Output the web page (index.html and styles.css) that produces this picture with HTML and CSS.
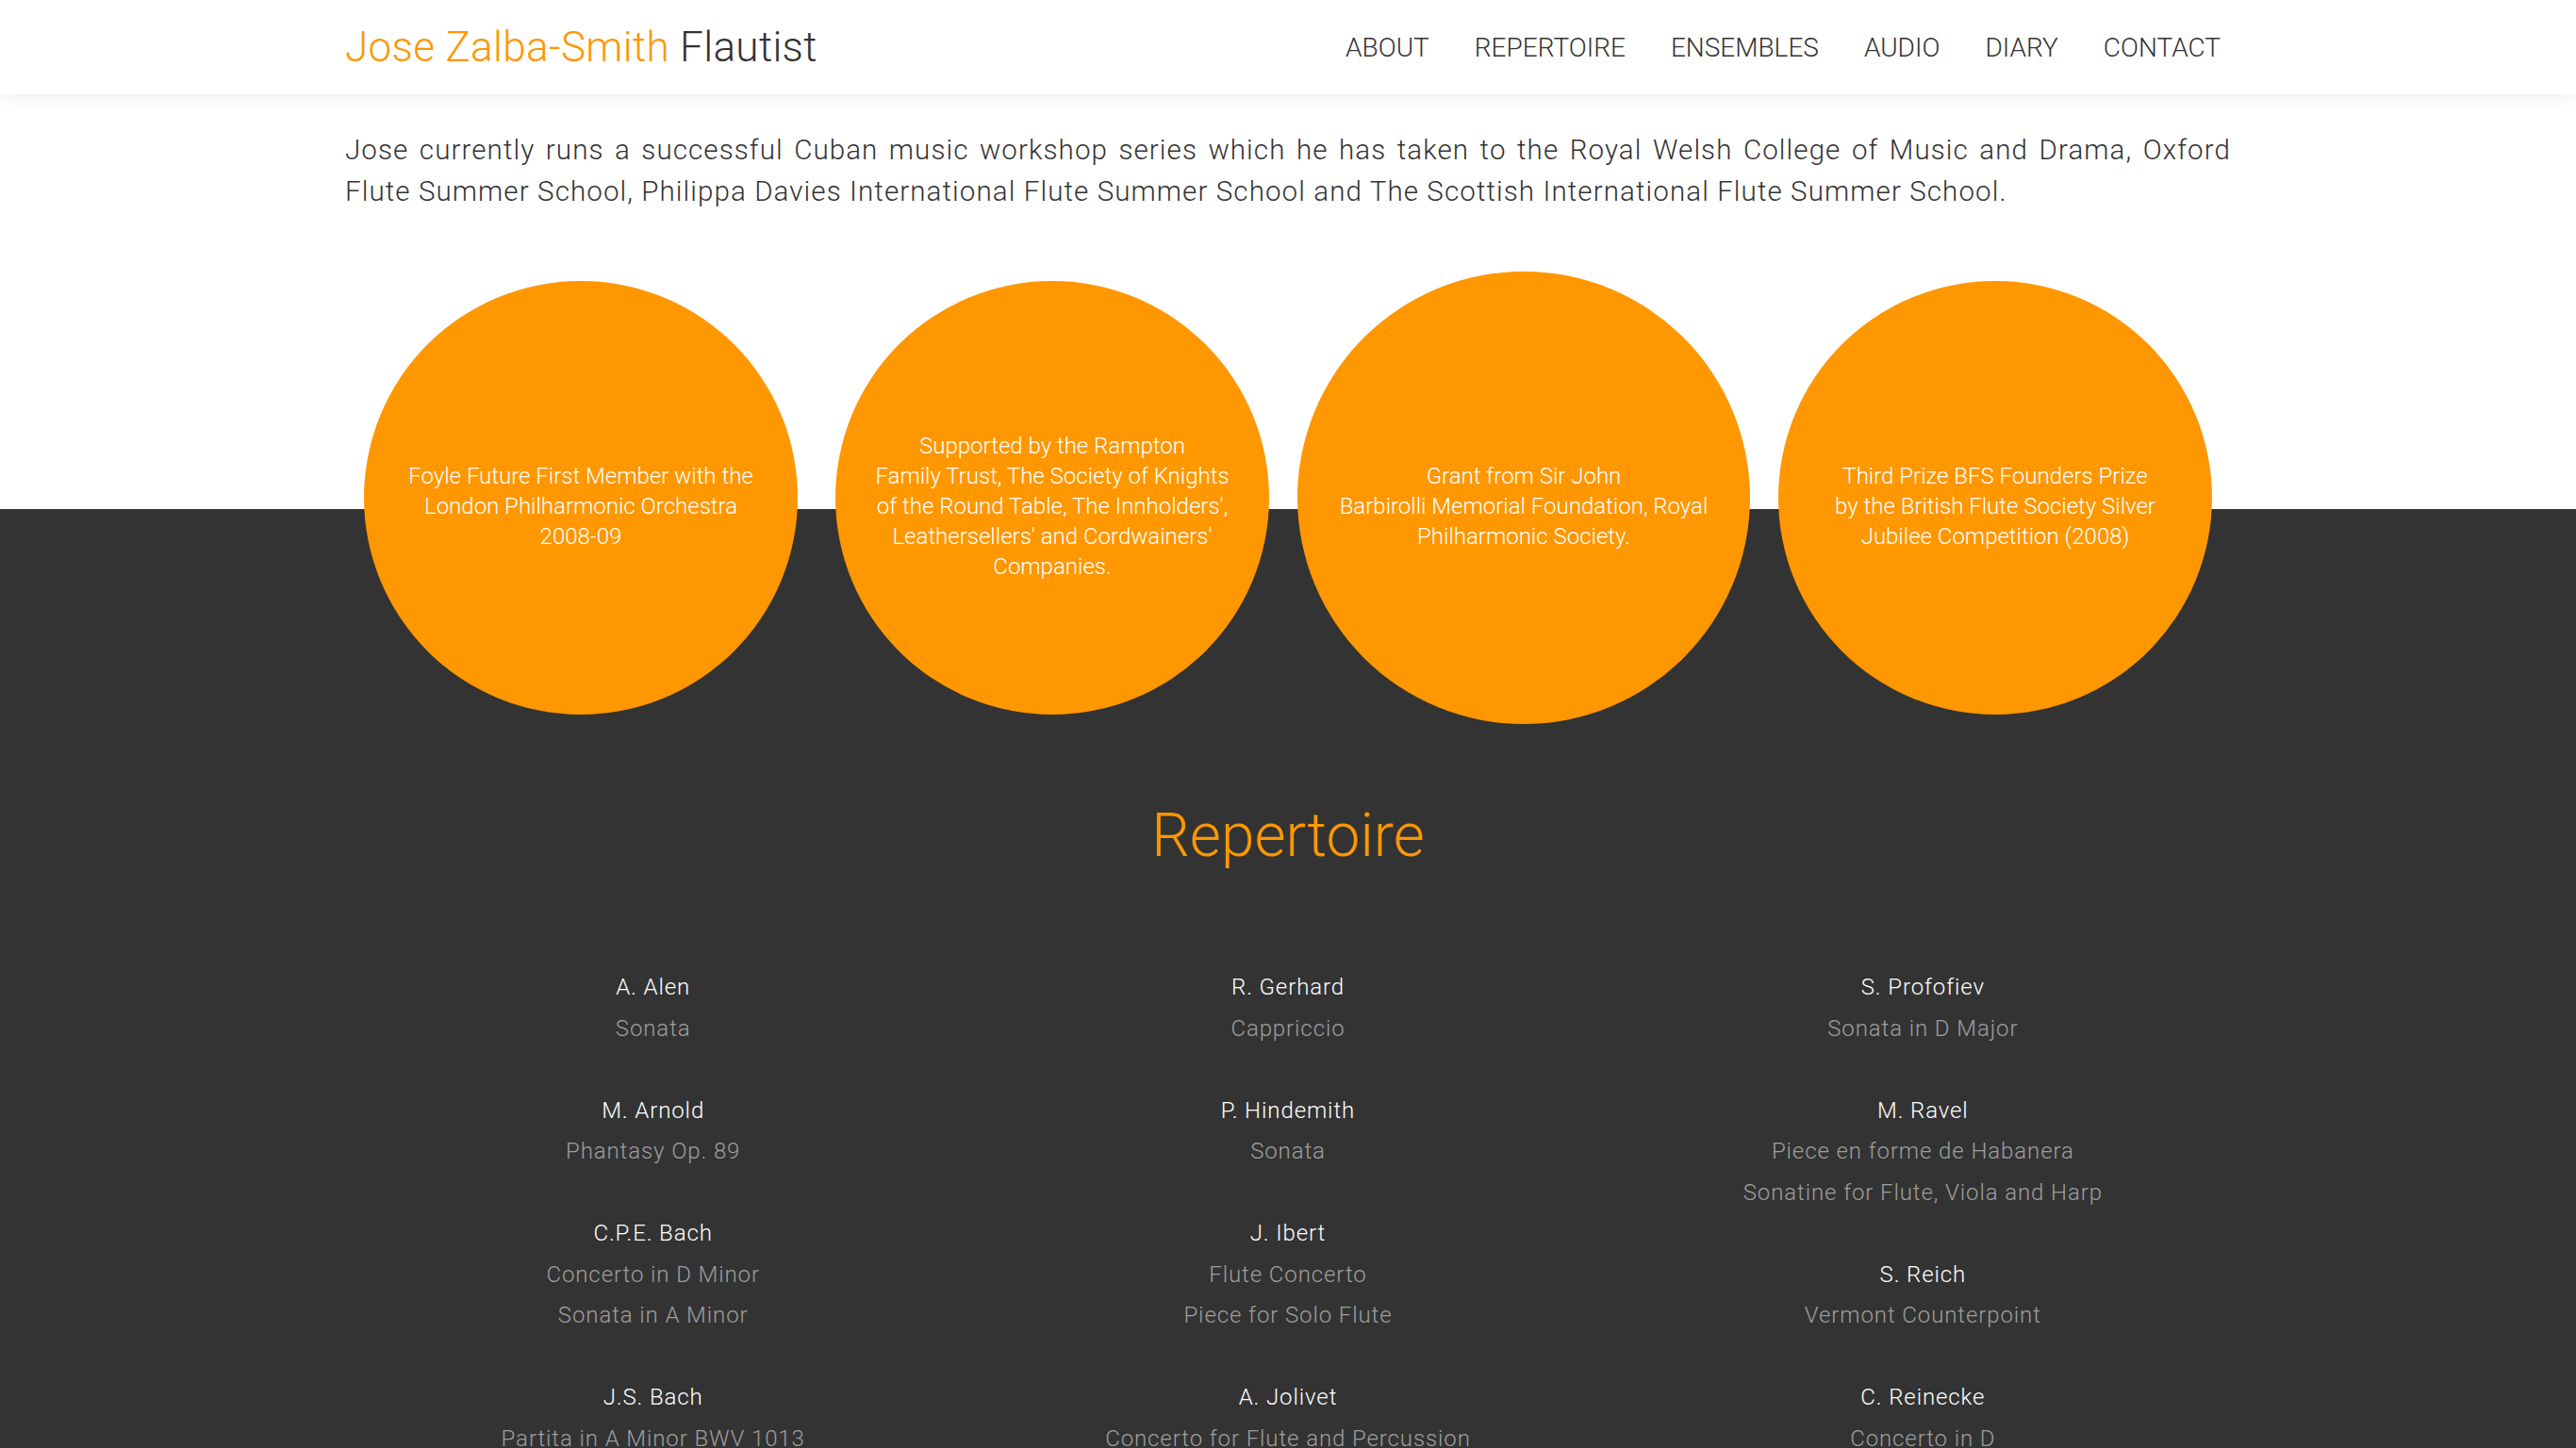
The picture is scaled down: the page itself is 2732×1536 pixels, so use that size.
FILE: index.html
```html
<!DOCTYPE html>
<html lang="en">
<head>
<meta charset="utf-8">
<title>Jose Zalba-Smith Flautist</title>
<link rel="stylesheet" href="styles.css">
</head>
<body>
<header class="site-header">
  <div class="container header-inner">
    <a class="logo" href="#"><span class="logo-name">Jose Zalba-Smith</span> Flautist</a>
    <nav class="main-nav">
      <a href="#">ABOUT</a>
      <a href="#">REPERTOIRE</a>
      <a href="#">ENSEMBLES</a>
      <a href="#">AUDIO</a>
      <a href="#">DIARY</a>
      <a href="#">CONTACT</a>
    </nav>
  </div>
</header>

<section class="about">
  <div class="container">
    <p class="intro">Jose currently runs a successful Cuban music workshop series which he has taken to the Royal Welsh College of Music and Drama, Oxford Flute Summer School, Philippa Davies International Flute Summer School and The Scottish International Flute Summer School.</p>
  </div>
</section>

<section class="awards">
  <div class="container awards-row">
    <div class="award">
      <div class="circle"><p>Foyle Future First Member with the<br>London Philharmonic Orchestra<br>2008-09</p></div>
    </div>
    <div class="award">
      <div class="circle"><p>Supported by the Rampton<br>Family Trust, The Society of Knights<br>of the Round Table, The Innholders',<br>Leathersellers' and Cordwainers'<br>Companies.</p></div>
    </div>
    <div class="award">
      <div class="circle circle-active"><p>Grant from Sir John<br>Barbirolli Memorial Foundation, Royal<br>Philharmonic Society.</p></div>
    </div>
    <div class="award">
      <div class="circle"><p>Third Prize BFS Founders Prize<br>by the British Flute Society Silver<br>Jubilee Competition (2008)</p></div>
    </div>
  </div>
</section>

<section class="repertoire">
  <div class="container">
    <h2 class="section-title">Repertoire</h2>
    <div class="rep-grid">
      <div class="rep-col">
        <div class="rep-item"><p class="composer">A. Alen</p><p class="piece">Sonata</p></div>
        <div class="rep-item"><p class="composer">M. Arnold</p><p class="piece">Phantasy Op. 89</p></div>
        <div class="rep-item"><p class="composer">C.P.E. Bach</p><p class="piece">Concerto in D Minor</p><p class="piece">Sonata in A Minor</p></div>
        <div class="rep-item"><p class="composer">J.S. Bach</p><p class="piece">Partita in A Minor BWV 1013</p></div>
      </div>
      <div class="rep-col">
        <div class="rep-item"><p class="composer">R. Gerhard</p><p class="piece">Cappriccio</p></div>
        <div class="rep-item"><p class="composer">P. Hindemith</p><p class="piece">Sonata</p></div>
        <div class="rep-item"><p class="composer">J. Ibert</p><p class="piece">Flute Concerto</p><p class="piece">Piece for Solo Flute</p></div>
        <div class="rep-item"><p class="composer">A. Jolivet</p><p class="piece">Concerto for Flute and Percussion</p></div>
      </div>
      <div class="rep-col">
        <div class="rep-item"><p class="composer">S. Profofiev</p><p class="piece">Sonata in D Major</p></div>
        <div class="rep-item"><p class="composer">M. Ravel</p><p class="piece">Piece en forme de Habanera</p><p class="piece">Sonatine for Flute, Viola and Harp</p></div>
        <div class="rep-item"><p class="composer">S. Reich</p><p class="piece">Vermont Counterpoint</p></div>
        <div class="rep-item"><p class="composer">C. Reinecke</p><p class="piece">Concerto in D</p></div>
      </div>
    </div>
  </div>
</section>
</body>
</html>
```

FILE: styles.css
```css
* {
  box-sizing: border-box;
}

html, body {
  margin: 0;
  padding: 0;
}

body {
  font-family: Roboto, "Noto Sans", sans-serif;
  font-weight: 300;
  color: #333;
  background: #333;
}

a {
  color: inherit;
  text-decoration: none;
}

.container {
  width: 2000px;
  margin: 0 auto;
}

/* Header */
.site-header {
  height: 100px;
  background: #fff;
  box-shadow: 0 0 18px rgba(0, 0, 0, 0.09);
  position: relative;
  z-index: 2;
}

.header-inner {
  height: 100%;
  display: flex;
  align-items: center;
  justify-content: space-between;
}

.logo {
  font-size: 44px;
  letter-spacing: 0.35px;
  color: #333;
  line-height: 1;
}

.logo-name {
  color: #fe9700;
}

.main-nav {
  display: flex;
  gap: 48px;
  margin-right: 11px;
  font-size: 28px;
  color: #333;
}

/* About */
.about {
  background: #fff;
  padding: 38px 0 53px;
}

.intro {
  margin: 0;
  font-size: 29.5px;
  letter-spacing: 1.1px;
  line-height: 43.5px;
  text-align: justify;
  color: #333;
}

/* Awards */
.awards {
  background: linear-gradient(to bottom, #fff 0, #fff 262px, #333 262px, #333 100%);
}

.awards-row {
  display: flex;
  align-items: center;
  height: 500px;
}

.award {
  flex: 1 1 0;
  display: flex;
  justify-content: center;
  align-items: center;
}

.circle {
  width: 460px;
  height: 460px;
  border-radius: 50%;
  background: #fe9700;
  color: #fff;
  display: flex;
  align-items: center;
  justify-content: center;
  text-align: center;
  padding: 17px 20px 0;
  font-size: 24px;
  line-height: 32px;
}

.circle-active {
  width: 480px;
  height: 480px;
}

.circle p {
  margin: 0;
}

/* Repertoire */
.repertoire {
  background: #333;
  padding: 71px 0 120px;
}

.section-title {
  margin: 0;
  text-align: center;
  font-size: 64px;
  font-weight: 300;
  line-height: 75px;
  color: #fe9700;
}

.rep-grid {
  display: grid;
  grid-template-columns: repeat(3, 1fr);
  margin: 102px -10px 0;
  text-align: center;
}

.rep-item {
  margin-bottom: 43.5px;
}

.rep-item p {
  margin: 0;
  font-size: 24px;
  letter-spacing: 0.9px;
  line-height: 43.5px;
}

.composer {
  color: #fff;
}

.piece {
  color: #9e9e9e;
}
```
